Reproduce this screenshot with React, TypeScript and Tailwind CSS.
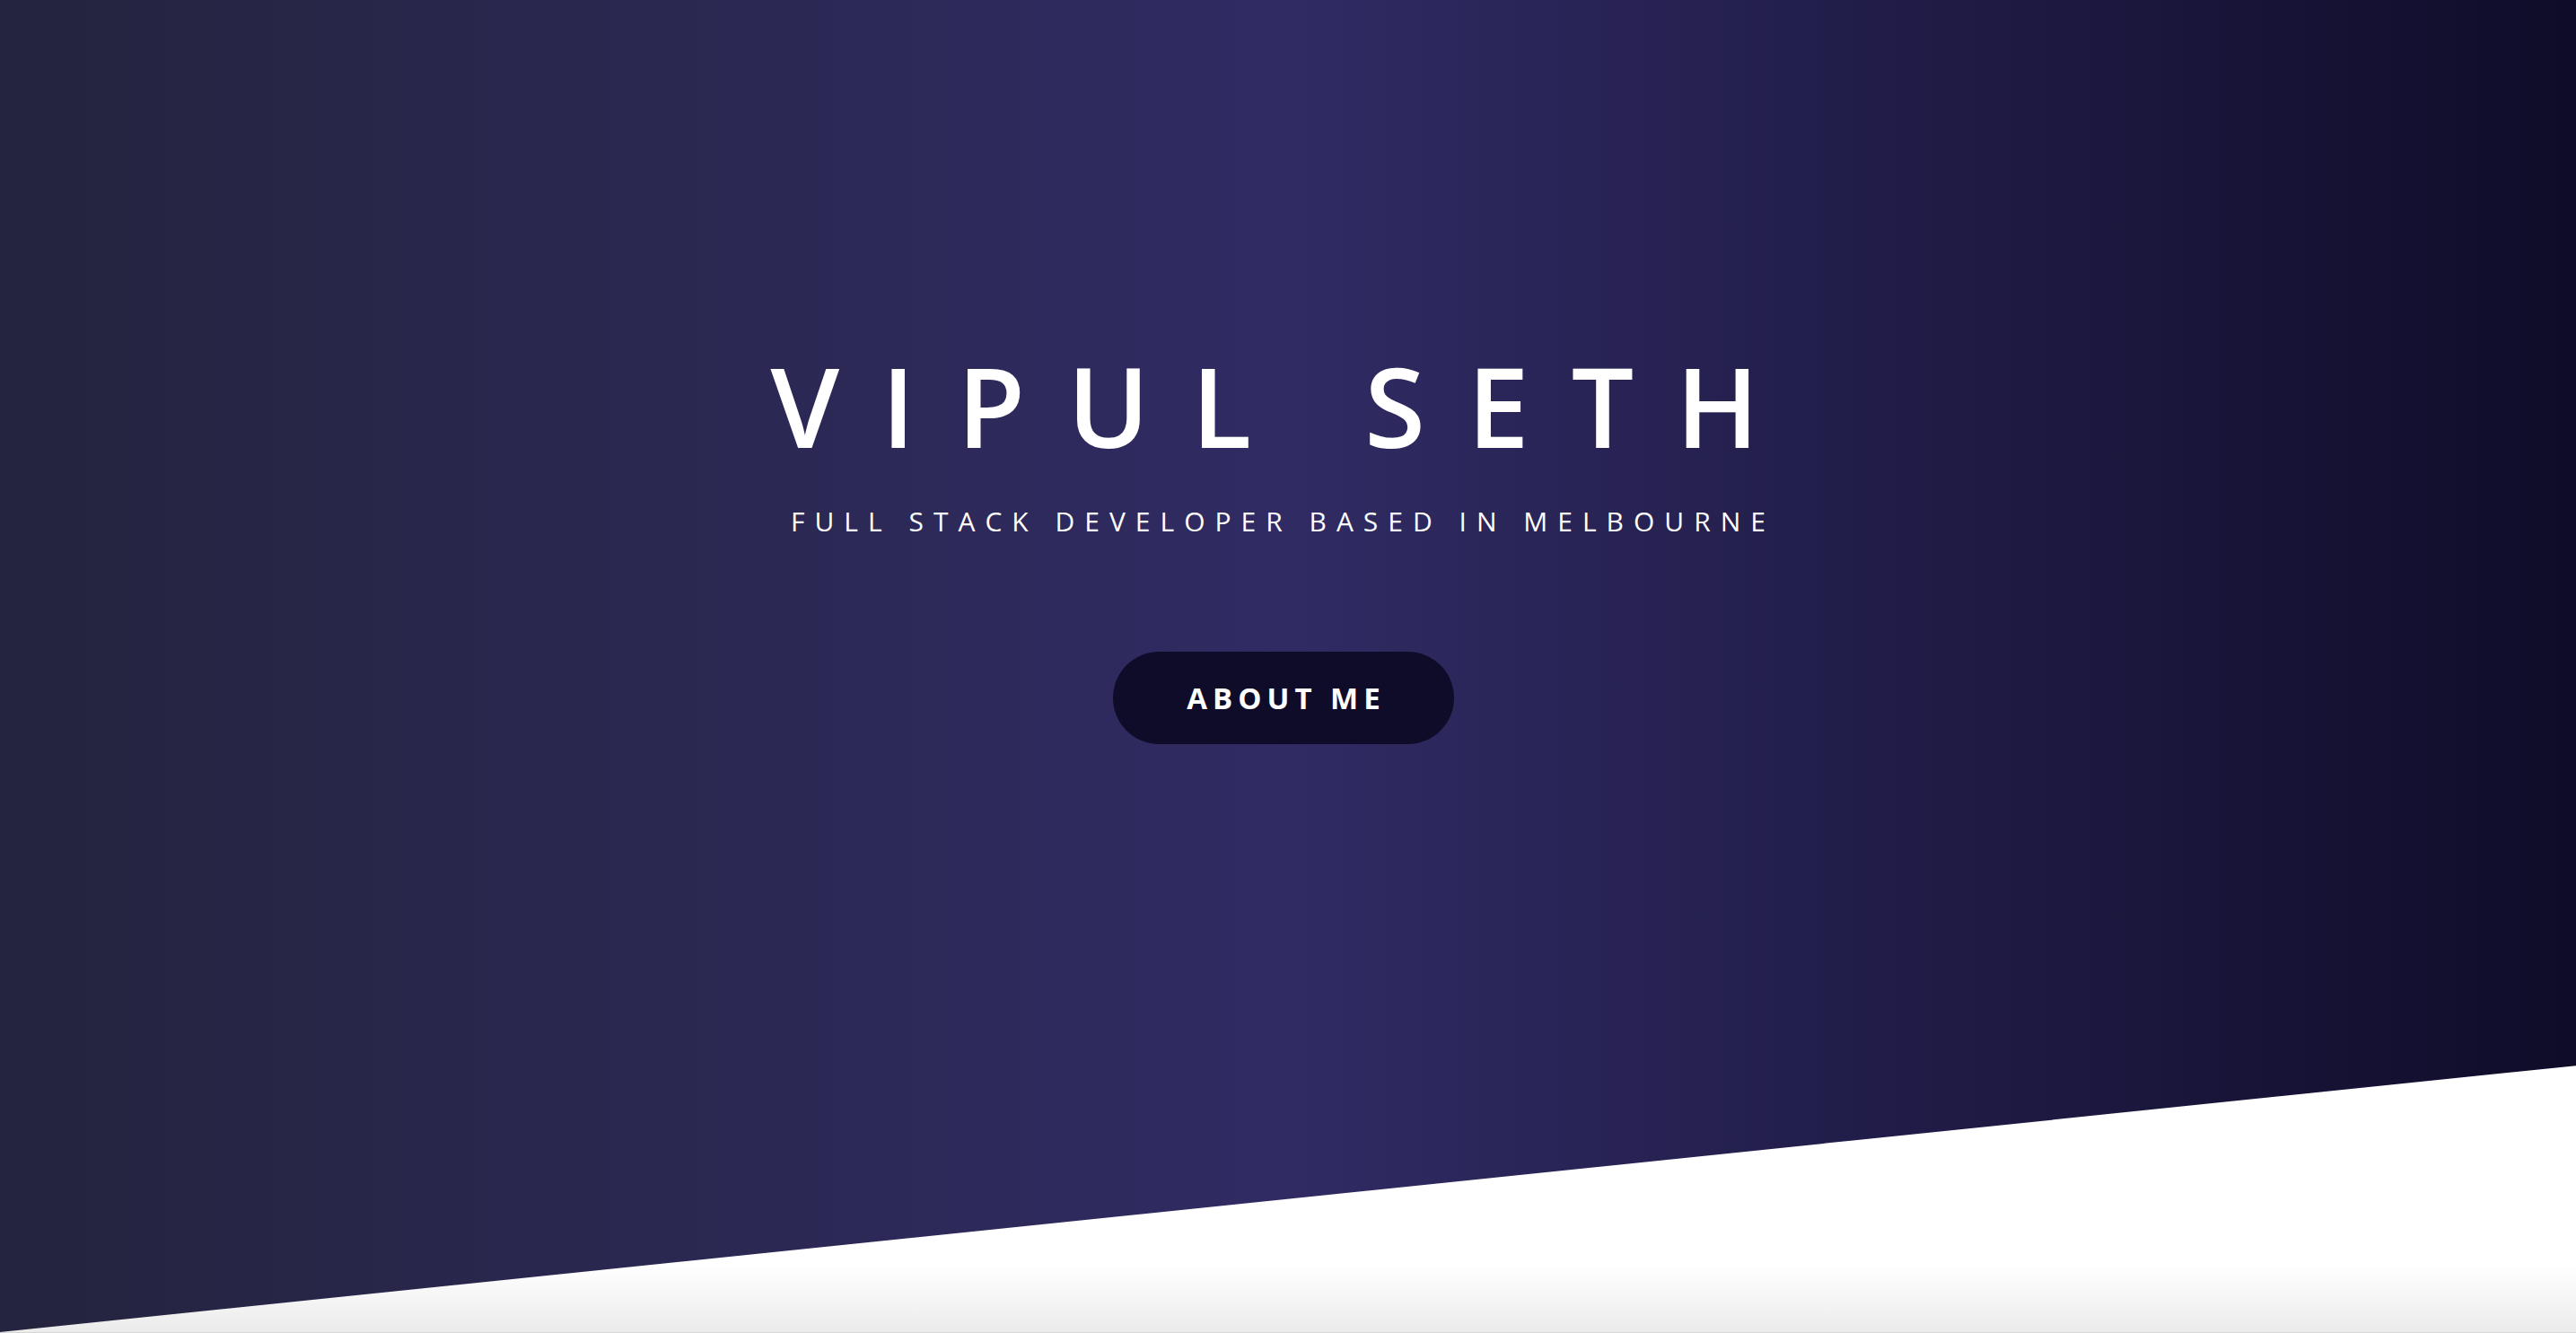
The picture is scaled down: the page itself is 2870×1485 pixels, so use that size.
import React from 'react'

const App: React.FC = () => {
    return (
        <div className="relative h-[1485px] w-full overflow-hidden border-b border-[#d6d6d6] bg-[linear-gradient(to_bottom,#ffffff_95%,#ebebeb)]">
            {/* hero, cut on the diagonal */}
            <header
                className="h-full w-full bg-[linear-gradient(to_right,#24243e,#302b63,#0f0c29)] [clip-path:polygon(0_0,100%_0,100%_80%,0_100%)]"
                style={{ fontFamily: '"Open Sans", "Liberation Sans", sans-serif' }}
            >
                <div className="flex flex-col items-center pt-[390px] text-white">
                    <h1 className="text-[123px] font-semibold leading-none tracking-[47px] pl-[47px] -ml-[52px]">
                        VIPUL SETH
                    </h1>
                    <p className="mt-[53px] text-[30px] font-normal leading-none tracking-[11px] pl-[11px] -ml-[22px]">
                        FULL STACK DEVELOPER BASED IN MELBOURNE
                    </p>
                    <a
                        href="#about"
                        className="mt-[130px] flex h-[103px] w-[380px] items-center justify-center rounded-full bg-[#0f0c29] text-[33px] font-bold leading-none tracking-[6px] pl-[6px] -ml-[10px]"
                    >
                        ABOUT ME
                    </a>
                </div>
            </header>
        </div>
    )
}

export default App
